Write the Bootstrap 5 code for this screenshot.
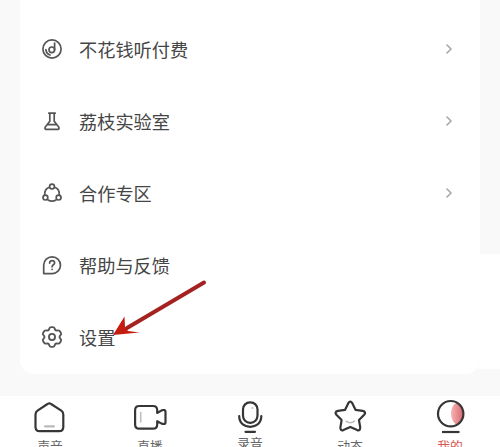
<!DOCTYPE html>
<html lang="zh-CN">
<head>
<meta charset="utf-8">
<meta name="viewport" content="width=device-width, initial-scale=1">
<title>设置</title>
<link href="https://cdn.jsdelivr.net/npm/bootstrap@5.3.0/dist/css/bootstrap.min.css" rel="stylesheet">
<style>
body { font-family: "Noto Sans CJK SC", sans-serif; background: #fff; height: 447px; }
.page-area { height: 396px; padding: 0 20px; background: linear-gradient(#fff, #fff) right 254px / 21px 115px no-repeat, #f9f9f9; }
.menu-card { height: 374px; padding-top: 13px; border-radius: 0 0 14px 14px; }
.menu-row { height: 72px; padding: 0 25px 0 20px; color: #454545; font-size: 18.2px; line-height: 24px; }
.menu-row span { margin-top: -1px; }
.menu-icon { width: 24px; height: 24px; margin-right: 15px; }
.line { fill: none; stroke: #555; stroke-width: 1.7; stroke-linecap: round; stroke-linejoin: round; }
.chevron { width: 11px; height: 12px; fill: none; stroke: #aaa; stroke-width: 1.6; }
.tab-bar { height: 51px; }
.tab-item { width: 100px; padding-top: 3px; color: #666; font-size: 12.8px; line-height: 18px; }
.tab-item svg { width: 38px; height: 36px; flex-shrink: 0; fill: none; stroke: #363636; stroke-width: 2.2; stroke-linejoin: round; stroke-linecap: round; }
.tab-item span { margin-top: 2px; }
.tab-item.is-raised span { margin-top: -1px; }
.tab-item.is-current { color: #d8564f; }
.pointer { left: 105px; top: 275px; width: 110px; height: 70px; }
</style>
<script src="https://cdn.jsdelivr.net/npm/bootstrap@5.3.0/dist/js/bootstrap.bundle.min.js"></script>
</head>
<body class="overflow-hidden position-relative">
<main class="page-area">
  <div class="menu-card bg-white">
    <div class="menu-row d-flex align-items-center">
      <svg class="menu-icon line" viewBox="0 0 24 24"><circle cx="12" cy="12" r="9.1"/><circle cx="11.800" cy="12.800" r="2.800"/><path d="M14.600 12.800V6M5.900 12.600c.3 2.700 1.800 4.600 4.200 5.400"/></svg>
      <span class="flex-grow-1">不花钱听付费</span>
      <svg class="chevron" viewBox="0 0 11 12"><path d="M2.500 1.500L7 6l-4.500 4.500"/></svg>
    </div>
    <div class="menu-row d-flex align-items-center">
      <svg class="menu-icon line" viewBox="0 0 24 24"><path d="M8.800 4.200h6.400M9.800 4.400v7.800L5.300 18c-.8 1.100-.3 2.300.9 2.300h11.600c1.200 0 1.700-1.200.9-2.300l-4.500-5.800V4.400M7.500 15.700h9"/></svg>
      <span class="flex-grow-1">荔枝实验室</span>
      <svg class="chevron" viewBox="0 0 11 12"><path d="M2.500 1.500L7 6l-4.500 4.500"/></svg>
    </div>
    <div class="menu-row d-flex align-items-center">
      <svg class="menu-icon line" viewBox="0 0 24 24"><circle cx="12" cy="5.500" r="2.400"/><circle cx="5.400" cy="16.600" r="2.400"/><circle cx="18.600" cy="16.600" r="2.400"/><path d="M9.300 6.300C6.200 7.500 4.500 10.300 4.800 13.500M14.700 6.300c3.100 1.200 4.800 4 4.500 7.200M8 18.900c2.500 1.500 5.500 1.500 8 0"/></svg>
      <span class="flex-grow-1">合作专区</span>
      <svg class="chevron" viewBox="0 0 11 12"><path d="M2.500 1.500L7 6l-4.500 4.500"/></svg>
    </div>
    <div class="menu-row d-flex align-items-center">
      <svg class="menu-icon line" viewBox="0 0 24 24"><path d="M3.700 20.600V12a8.400 8.400 0 1 1 8.400 8.600z"/><path d="M9.600 10.100c0-3.400 5-3.200 5-.2 0 1.800-2.500 1.900-2.500 3.900M12.100 16.300v.2"/></svg>
      <span class="flex-grow-1">帮助与反馈</span>
    </div>
    <div class="menu-row d-flex align-items-center">
      <svg class="menu-icon line" viewBox="1 1 22 22"><path d="M9.500 4.300Q10 3 11.300 3h1.400q1.300 0 1.800 1.300l.4 1.200 1.100.6 1.400-.2q1.300-.2 2 1l.7 1.200q.7 1.100-.2 2.100l-.9 1.200v1.200l.9 1.200q.9 1 .2 2.100l-.7 1.200q-.7 1.200-2 1l-1.400-.2-1.100.6-.4 1.200Q14 21 12.700 21h-1.400q-1.300 0-1.800-1.300l-.4-1.200-1.100-.6-1.400.2q-1.300.2-2-1l-.7-1.200q-.7-1.100.2-2.100l.9-1.200v-1.200l-.9-1.200q-.9-1-.2-2.100l.7-1.200q.7-1.200 2-1l1.400.2 1.100-.6z"/><circle cx="12" cy="12" r="2.800"/></svg>
      <span class="flex-grow-1">设置</span>
    </div>
  </div>
</main>
<nav class="tab-bar d-flex bg-white">
  <div class="tab-item d-flex flex-column align-items-center">
    <svg viewBox="0 0 38 36"><path d="M16.500 5Q18.300 3.600 20.100 5L30.300 11.700Q32.300 13 32.300 15.500V28q0 4.200-4.200 4.200H8.700Q4.500 32.200 4.500 28V15.500Q4.500 13 6.500 11.700z"/><path d="M14 27.300h9" stroke="#bbb"/></svg>
    <span>声音</span>
  </div>
  <div class="tab-item d-flex flex-column align-items-center">
    <svg viewBox="0 0 38 36"><path d="M8.300 7H22q4.200 0 4.200 4.200V14l4.500-2.600q3.800-1.200 3.800 1.200v10.800q0 2.400-3.800 1.200l-4.500-2.400v3.300q0 4.200-4.200 4.200H8.300q-4.200 0-4.200-4.200V11.200q0-4.200 4.200-4.200z"/><path d="M9.700 13.500v9.500" stroke="#bbb" stroke-width="1.500"/></svg>
    <span>直播</span>
  </div>
  <div class="tab-item is-raised d-flex flex-column align-items-center">
    <svg viewBox="0 0 38 36"><rect x="12" y="3.300" width="14.500" height="20.500" rx="7"/><path d="M8.200 17c0 7 4.800 10.800 11 10.800S30.300 24 30.300 17M14.500 32.800h9.500"/><circle cx="21.500" cy="9" r="1" fill="#bbb" stroke="none"/></svg>
    <span>录音</span>
  </div>
  <div class="tab-item d-flex flex-column align-items-center">
    <svg viewBox="0 0 38 36"><path d="M17.300 4.200q2-3.200 4 0l3.200 6.600 7.200 1.100q3.800 1 1.500 3.800l-5.200 5.400 1.200 7.300q.3 3.600-3 2.700L19.300 27.900l-6.900 3.200q-3.300.9-3-2.700l1.200-7.300-5.200-5.400q-2.300-2.800 1.500-3.800l7.200-1.100z"/><path d="M15 22.200q4.300 3 8.600 0" stroke="#bbb" stroke-width="1.500"/></svg>
    <span>动态</span>
  </div>
  <div class="tab-item is-current d-flex flex-column align-items-center">
    <svg viewBox="0 0 38 36"><defs><linearGradient id="blush"><stop stop-color="#f6b5b5"/><stop offset="1" stop-color="#dc6570"/></linearGradient></defs><path d="M25.500 3.500q7 4 7 11t-7 11.300q-5.500-4-5.500-11.300t5.500-11z" fill="url(#blush)" stroke="none"/><circle cx="19.700" cy="14.700" r="12.700"/><path d="M11 33h17.500" stroke-linecap="butt"/></svg>
    <span>我的</span>
  </div>
</nav>
<svg class="pointer position-absolute" viewBox="0 0 110 70"><path d="M99 7.500L22 53" fill="none" stroke="#a42320" stroke-width="4" stroke-linecap="round"/><path d="M8 60l11.500-18.500L20 52l3 4 11.500 1.500z" fill="#c51c10"/></svg>
</body>
</html>
